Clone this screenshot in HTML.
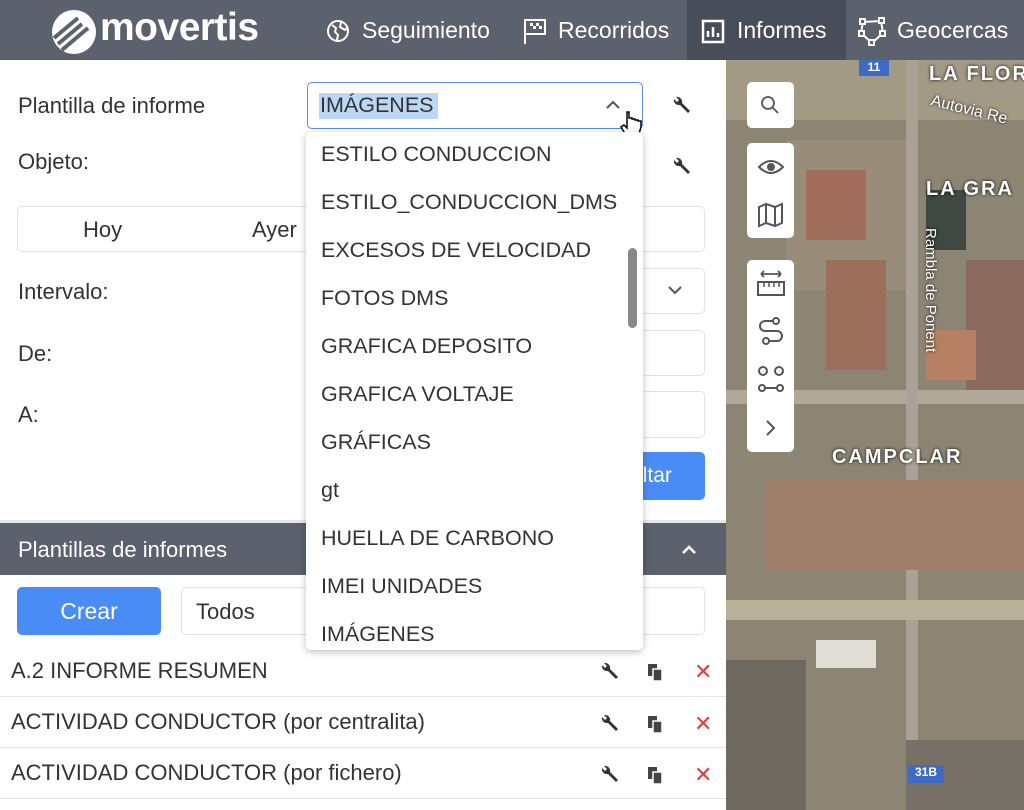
<!DOCTYPE html>
<html><head><meta charset="utf-8"><style>
*{box-sizing:border-box;margin:0;padding:0}
body{width:1024px;height:810px;overflow:hidden;font-family:"Liberation Sans",sans-serif;color:#333;background:#fff;position:relative}
.abs{position:absolute;white-space:nowrap}
.hdr{left:0;top:0;width:1024px;height:60px;background:#5b616d}
.nav{color:#fff;font-size:23px;top:17px}
.lbl{font-size:22px;color:#333}
.box{border:1px solid #e2e2e2;border-radius:5px;background:#fff}
.map{left:726px;top:60px;width:298px;height:750px;background:#8d8574;overflow:hidden}
.ctl{left:747px;width:47px;background:#fff;border-radius:5px}
.dd{left:306px;top:132px;width:337px;height:518px;background:#fff;border-radius:5px;box-shadow:0 2px 8px rgba(0,0,0,.25);overflow:hidden}
.dd div{position:absolute;left:15px;font-size:21.5px;color:#333;white-space:nowrap}
.row{left:0;width:726px;height:51px;border-bottom:1px solid #e3e3e3;font-size:22px}
.row span{position:absolute;left:11px;top:12px}
.x{color:#e0413a;font-size:22px}
.mt{color:#fff;font-weight:bold;font-size:20px;letter-spacing:2px;text-shadow:0 0 3px #000}
</style></head><body>
<div class="abs hdr"></div>
<svg class="abs" style="left:48px;top:8px" width="52" height="48" viewBox="0 0 52 48"><circle cx="26" cy="24" r="22" fill="#fff"/><path d="M6 30 L30 10 M10 36 L34 16 M14 42 L40 20" stroke="#5b616d" stroke-width="4"/></svg>
<div class="abs" style="left:100px;top:6px;font-size:39px;font-weight:bold;color:#fff;letter-spacing:-0.5px">movertis</div>
<svg class="abs" style="left:326px;top:19px" width="24" height="24" viewBox="0 0 24 24"><circle cx="12" cy="12" r="10" fill="none" stroke="#fff" stroke-width="2"/><path d="M6 6 L10 9 L9 13 L12 16 L11 21 M15 3 L14 8 L19 11 L21 9" stroke="#fff" stroke-width="2" fill="none"/></svg>
<div class="abs nav" style="left:362px">Seguimiento</div>
<svg class="abs" style="left:522px;top:17px" width="26" height="28" viewBox="0 0 26 28"><path d="M3 2 V27" stroke="#fff" stroke-width="2"/><rect x="3" y="3" width="20" height="14" fill="none" stroke="#fff" stroke-width="2"/><path d="M8 6h3v3h-3zM14 6h3v3h-3zM11 9h3v3h-3zM17 9h3v3h-3z" fill="#fff"/></svg>
<div class="abs nav" style="left:558px">Recorridos</div>
<div class="abs" style="left:687px;top:0;width:159px;height:60px;background:#474d59"></div>
<svg class="abs" style="left:701px;top:18px" width="24" height="26" viewBox="0 0 24 26"><rect x="2" y="3" width="20" height="21" fill="none" stroke="#fff" stroke-width="2.5"/><path d="M7 19V13M12 19V9M17 19V15" stroke="#fff" stroke-width="2.5"/></svg>
<div class="abs nav" style="left:737px">Informes</div>
<svg class="abs" style="left:857px;top:16px" width="30" height="30" viewBox="0 0 30 30"><path d="M6 6 L24 5 L26 17 L15 27 L4 17 Z" fill="none" stroke="#fff" stroke-width="2"/><g fill="#5b616d" stroke="#fff" stroke-width="2"><rect x="3" y="3" width="5" height="5"/><rect x="22" y="2" width="5" height="5"/><rect x="2" y="15" width="5" height="5"/><rect x="23" y="15" width="5" height="5"/><rect x="12" y="24" width="5" height="5"/></g></svg>
<div class="abs nav" style="left:897px">Geocercas</div>

<!-- left form -->
<div class="abs lbl" style="left:18px;top:93px">Plantilla de informe</div>
<div class="abs" style="left:307px;top:82px;width:336px;height:47px;border:1px solid #5b8fe0;border-radius:5px;background:#fff"></div>
<div class="abs" style="left:319px;top:93px;height:26px;width:119px;background:#bcd6f5"></div>
<div class="abs lbl" style="left:320px;top:93px;font-size:21.5px">IMÁGENES</div>
<svg class="abs" style="left:605px;top:100px" width="16" height="10"><path d="M2 8 L8 2 L14 8" stroke="#555" stroke-width="2" fill="none"/></svg>
<svg class="abs" style="left:619px;top:110px" width="24" height="34" viewBox="0 0 24 34"><path d="M8 2 v16 l-3-3 -3 2 6 10 h11 l3-10 v-6 h-3 v-1 h-3 v-1 h-3 v-1 h-3 V2 Z" fill="#fff" stroke="#000" stroke-width="1.5"/></svg>
<div class="abs lbl" style="left:18px;top:149px">Objeto:</div>
<div class="abs box" style="left:17px;top:206px;width:688px;height:46px"></div>
<div class="abs lbl" style="left:83px;top:217px">Hoy</div>
<div class="abs lbl" style="left:252px;top:217px">Ayer</div>
<div class="abs lbl" style="left:18px;top:279px">Intervalo:</div>
<div class="abs box" style="left:560px;top:268px;width:145px;height:46px"></div>
<svg class="abs" style="left:667px;top:285px" width="16" height="10"><path d="M2 2 L8 8 L14 2" stroke="#555" stroke-width="2" fill="none"/></svg>
<div class="abs lbl" style="left:18px;top:341px">De:</div>
<div class="abs box" style="left:560px;top:330px;width:145px;height:46px"></div>
<div class="abs lbl" style="left:18px;top:402px">A:</div>
<div class="abs box" style="left:560px;top:391px;width:145px;height:47px"></div>
<div class="abs" style="left:560px;top:452px;width:145px;height:48px;background:#4a8cf5;border-radius:5px;color:#fff;font-size:21px;padding:12px 0 0 22px;overflow:hidden">Consultar</div>
<svg class="abs" style="left:670px;top:95px" width="22" height="22" viewBox="0 0 22 22"><path d="M4 4 a5 5 0 0 0 6 6 l8 8 2-2 -8-8 a5 5 0 0 0 -6-6 l3 3 -2 2 z" fill="#333"/></svg>
<svg class="abs" style="left:670px;top:156px" width="22" height="22" viewBox="0 0 22 22"><path d="M4 4 a5 5 0 0 0 6 6 l8 8 2-2 -8-8 a5 5 0 0 0 -6-6 l3 3 -2 2 z" fill="#333"/></svg>

<div class="abs" style="left:0;top:520px;width:726px;height:3px;background:#e8e8e8"></div>
<div class="abs" style="left:0;top:523px;width:726px;height:52px;background:#5b616d"></div>
<div class="abs" style="left:18px;top:537px;color:#fff;font-size:22px">Plantillas de informes</div>
<svg class="abs" style="left:681px;top:545px" width="16" height="10"><path d="M2 8 L8 2 L14 8" stroke="#fff" stroke-width="2.5" fill="none"/></svg>
<div class="abs" style="left:17px;top:587px;width:144px;height:48px;background:#4a8cf5;border-radius:5px;color:#fff;font-size:23px;text-align:center;padding-top:11px">Crear</div>
<div class="abs box" style="left:181px;top:587px;width:524px;height:48px"></div>
<div class="abs lbl" style="left:196px;top:599px">Todos</div>

<div class="abs row" style="top:646px"><span>A.2 INFORME RESUMEN</span></div>
<div class="abs row" style="top:697px"><span>ACTIVIDAD CONDUCTOR (por centralita)</span></div>
<div class="abs row" style="top:748px"><span>ACTIVIDAD CONDUCTOR (por fichero)</span></div>
<svg class="abs" style="left:598px;top:661px" width="22" height="22" viewBox="0 0 22 22"><path d="M4 4 a5 5 0 0 0 6 6 l8 8 2-2 -8-8 a5 5 0 0 0 -6-6 l3 3 -2 2 z" fill="#333"/></svg>
<svg class="abs" style="left:598px;top:713px" width="22" height="22" viewBox="0 0 22 22"><path d="M4 4 a5 5 0 0 0 6 6 l8 8 2-2 -8-8 a5 5 0 0 0 -6-6 l3 3 -2 2 z" fill="#333"/></svg>
<svg class="abs" style="left:598px;top:764px" width="22" height="22" viewBox="0 0 22 22"><path d="M4 4 a5 5 0 0 0 6 6 l8 8 2-2 -8-8 a5 5 0 0 0 -6-6 l3 3 -2 2 z" fill="#333"/></svg>
<svg class="abs" style="left:646px;top:662px" width="20" height="20"><rect x="2" y="2" width="9" height="12" fill="#444"/><rect x="7" y="7" width="9" height="12" fill="#444" stroke="#fff" stroke-width="1.5"/></svg>
<svg class="abs" style="left:646px;top:714px" width="20" height="20"><rect x="2" y="2" width="9" height="12" fill="#444"/><rect x="7" y="7" width="9" height="12" fill="#444" stroke="#fff" stroke-width="1.5"/></svg>
<svg class="abs" style="left:646px;top:765px" width="20" height="20"><rect x="2" y="2" width="9" height="12" fill="#444"/><rect x="7" y="7" width="9" height="12" fill="#444" stroke="#fff" stroke-width="1.5"/></svg>
<div class="abs x" style="left:694px;top:659px">✕</div>
<div class="abs x" style="left:694px;top:711px">✕</div>
<div class="abs x" style="left:694px;top:762px">✕</div>

<!-- map -->
<div class="abs map">
<div class="abs" style="left:0;top:0;width:298px;height:60px;background:#a39a86"></div>
<div class="abs" style="left:60px;top:80px;width:120px;height:150px;background:#9a8c7a"></div>
<div class="abs" style="left:200px;top:130px;width:40px;height:60px;background:#3f4843"></div>
<div class="abs" style="left:80px;top:110px;width:60px;height:70px;background:#a06e5a"></div>
<div class="abs" style="left:100px;top:200px;width:60px;height:110px;background:#9c6e5c"></div>
<div class="abs" style="left:240px;top:200px;width:60px;height:130px;background:#8a6a5e"></div>
<div class="abs" style="left:0;top:330px;width:298px;height:14px;background:#b0a898"></div>
<div class="abs" style="left:180px;top:0;width:12px;height:750px;background:#aaa294"></div>
<div class="abs" style="left:200px;top:270px;width:50px;height:50px;background:#b78064"></div>
<div class="abs" style="left:40px;top:420px;width:260px;height:90px;background:#9e7e6a"></div>
<div class="abs" style="left:0;top:540px;width:298px;height:20px;background:#b9b09a"></div>
<div class="abs" style="left:90px;top:580px;width:60px;height:28px;background:#e0ddd6"></div>
<div class="abs" style="left:0;top:600px;width:80px;height:150px;background:#6f6a60"></div>
<div class="abs" style="left:180px;top:680px;width:120px;height:70px;background:#777066"></div>
<div class="abs" style="left:133px;top:0;width:30px;height:16px;background:#3d6bc4;color:#fff;font-size:12px;text-align:center;font-weight:bold">11</div>
<div class="abs mt" style="left:203px;top:3px">LA FLOR</div>
<div class="abs" style="left:205px;top:32px;color:#fff;font-size:16px;transform:rotate(14deg);transform-origin:left;text-shadow:0 0 3px #000">Autovia Re</div>
<div class="abs mt" style="left:200px;top:118px">LA GRA</div>
<div class="abs" style="left:196px;top:168px;color:#fff;font-size:15px;writing-mode:vertical-rl;text-shadow:0 0 3px #000">Rambla de Ponent</div>
<div class="abs mt" style="left:106px;top:386px">CAMPCLAR</div>
<div class="abs" style="left:182px;top:705px;width:36px;height:18px;background:#3d6bc4;color:#fff;font-size:12px;text-align:center;font-weight:bold">31B</div>
</div>
<div class="abs ctl" style="top:82px;height:46px"></div>
<svg class="abs" style="left:758px;top:93px" width="24" height="24"><circle cx="10" cy="10" r="6" fill="none" stroke="#555" stroke-width="1.8"/><path d="M14 14 L20 20" stroke="#555" stroke-width="1.8"/></svg>
<div class="abs ctl" style="top:143px;height:95px"></div>
<svg class="abs" style="left:757px;top:156px" width="28" height="22"><path d="M2 11 Q14 -1 26 11 Q14 23 2 11Z" fill="none" stroke="#555" stroke-width="2"/><circle cx="14" cy="11" r="4" fill="#555"/></svg>
<svg class="abs" style="left:757px;top:202px" width="28" height="26"><path d="M2 5 L9 2 L18 5 L25 2 V21 L18 24 L9 21 L2 24Z M9 2V21 M18 5V24" fill="none" stroke="#555" stroke-width="2"/></svg>
<div class="abs ctl" style="top:260px;height:192px"></div>
<svg class="abs" style="left:755px;top:268px" width="32" height="32"><path d="M6 6 H26 M6 6 l3-3 M6 6 l3 3 M26 6 l-3-3 M26 6 l-3 3" stroke="#555" stroke-width="1.8" fill="none"/><rect x="3" y="14" width="26" height="13" fill="none" stroke="#555" stroke-width="2"/><path d="M9 14v5M14 14v5M19 14v5M24 14v5" stroke="#555" stroke-width="1.5"/></svg>
<svg class="abs" style="left:757px;top:316px" width="28" height="30"><circle cx="19" cy="5" r="3" fill="none" stroke="#555" stroke-width="2"/><circle cx="9" cy="25" r="3" fill="none" stroke="#555" stroke-width="2"/><path d="M16 5 H8 a5 5 0 0 0 0 10 h12 a5 5 0 0 1 0 10 H12" fill="none" stroke="#555" stroke-width="2"/></svg>
<svg class="abs" style="left:757px;top:364px" width="28" height="30"><circle cx="6" cy="7" r="4" fill="none" stroke="#555" stroke-width="2"/><circle cx="22" cy="7" r="4" fill="none" stroke="#555" stroke-width="2"/><circle cx="5" cy="24" r="3" fill="none" stroke="#555" stroke-width="2"/><circle cx="23" cy="24" r="3" fill="none" stroke="#555" stroke-width="2"/><path d="M8 24H20" stroke="#555" stroke-width="2"/></svg>
<svg class="abs" style="left:763px;top:418px" width="16" height="20"><path d="M4 3 L11 10 L4 17" stroke="#555" stroke-width="2" fill="none"/></svg>

<!-- dropdown -->
<div class="abs dd">
<div style="top:10px">ESTILO CONDUCCION</div>
<div style="top:58px">ESTILO_CONDUCCION_DMS</div>
<div style="top:106px">EXCESOS DE VELOCIDAD</div>
<div style="top:154px">FOTOS DMS</div>
<div style="top:202px">GRAFICA DEPOSITO</div>
<div style="top:250px">GRAFICA VOLTAJE</div>
<div style="top:298px">GRÁFICAS</div>
<div style="top:346px">gt</div>
<div style="top:394px">HUELLA DE CARBONO</div>
<div style="top:442px">IMEI UNIDADES</div>
<div style="top:490px">IMÁGENES</div>
<span style="position:absolute;left:322px;top:116px;width:9px;height:80px;background:#888;border-radius:5px"></span>
</div>
</body></html>
